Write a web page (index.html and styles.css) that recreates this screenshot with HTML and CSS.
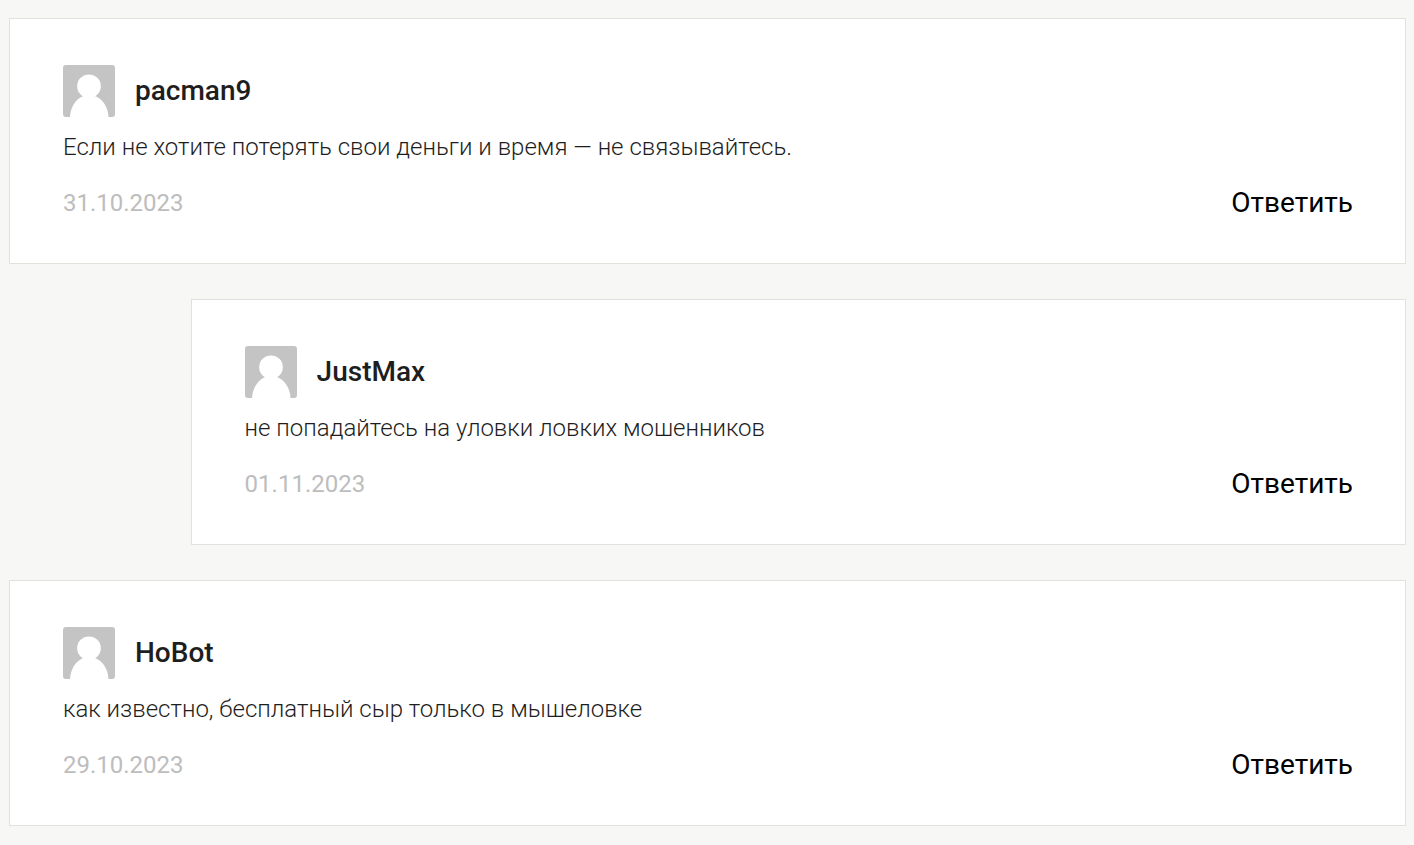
FILE: index.html
```html
<!DOCTYPE html>
<html lang="ru">
  <head>
    <meta charset="utf-8">
    <meta name="viewport" content="width=device-width, initial-scale=1">
    <title>Комментарии</title>
    <link rel="stylesheet" href="styles.css">
  </head>
  <body>
    <svg class="sprite" aria-hidden="true">
      <symbol id="avatar" viewBox="0 0 52 52">
        <rect width="52" height="52" rx="3" fill="#c4c4c4"/>
        <circle cx="26" cy="21.2" r="11.8" fill="#fff"/>
        <path fill="#fff" d="M7 52c.6-12 8.500-22 19.200-22S44.900 40 45.500 52z"/>
      </symbol>
    </svg>

    <main class="comments">
      <article class="comment">
        <header class="comment-author">
          <svg class="avatar" aria-hidden="true"><use href="#avatar"/></svg>
          <h3>pacman9</h3>
        </header>
        <p>Если не хотите потерять свои деньги и время — не связывайтесь.</p>
        <footer class="comment-footer">
          <time datetime="2023-10-31">31.10.2023</time>
          <a class="reply" href="#">Ответить</a>
        </footer>
      </article>

      <article class="comment child">
        <header class="comment-author">
          <svg class="avatar" aria-hidden="true"><use href="#avatar"/></svg>
          <h3>JustMax</h3>
        </header>
        <p>не попадайтесь на уловки ловких мошенников</p>
        <footer class="comment-footer">
          <time datetime="2023-11-01">01.11.2023</time>
          <a class="reply" href="#">Ответить</a>
        </footer>
      </article>

      <article class="comment">
        <header class="comment-author">
          <svg class="avatar" aria-hidden="true"><use href="#avatar"/></svg>
          <h3>HoBot</h3>
        </header>
        <p>как известно, бесплатный сыр только в мышеловке</p>
        <footer class="comment-footer">
          <time datetime="2023-10-29">29.10.2023</time>
          <a class="reply" href="#">Ответить</a>
        </footer>
      </article>
    </main>
  </body>
</html>
```
FILE: styles.css
```css
* {
    box-sizing: border-box;
}

body {
    margin: 0;
    background: #f7f7f5;
    color: #1e1e1e;
    font-family: Roboto, sans-serif;
}

.sprite {
    display: none;
}

.comments {
    display: flex;
    flex-direction: column;
    gap: 35px;
    padding: 18px 8px 18px 9px;
}

.comment {
    padding: 46px 52px 43px 53px;
    background: #fff;
    border: 1px solid #e2e2dd;
}

/* ответ на комментарий */
.comment.child {
    margin-left: 13%;
}

.comment-author {
    display: flex;
    align-items: center;
    gap: 20px;
}

.avatar {
    width: 52px;
    height: 52px;
}

.comment h3 {
    margin: 0;
    font-size: 28px;
    font-weight: 500;
    line-height: 36px;
}

.comment p {
    margin: 12px 0 21px;
    font-size: 24px;
    font-weight: 300;
    line-height: 36px;
}

.comment-footer {
    display: flex;
    justify-content: space-between;
    align-items: center;
    line-height: 34px;
}

.comment time {
    color: #bdbdbd;
    font-size: 24px;
}

.reply {
    color: #000;
    font-size: 28px;
    text-decoration: none;
}
```
